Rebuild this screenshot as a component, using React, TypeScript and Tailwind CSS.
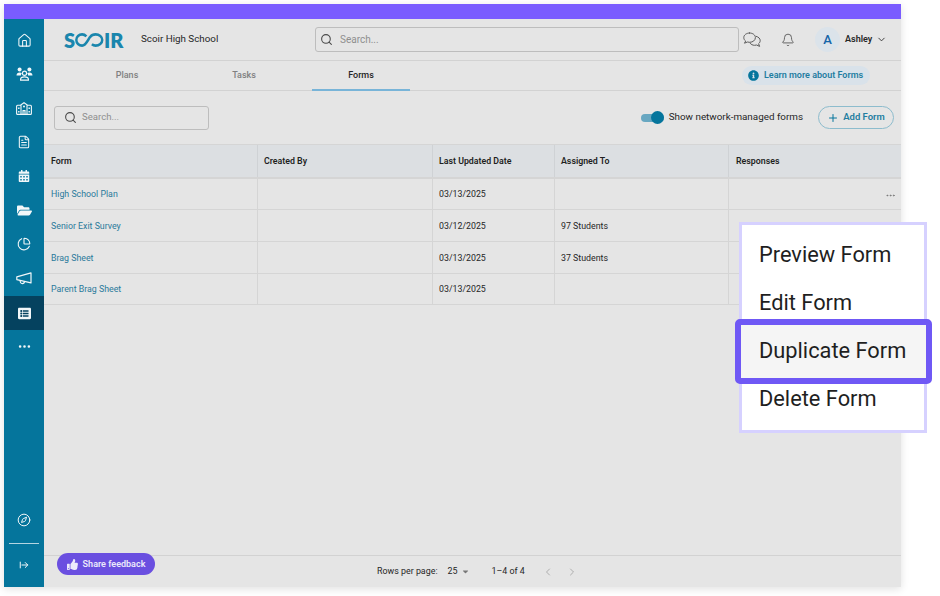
import { Home, FileText, PieChart, MoreHorizontal, Compass, ArrowRightFromLine, Search, Bell, ChevronDown, ChevronLeft, ChevronRight, Plus } from "lucide-react";
import { FaCalendarAlt, FaFolderOpen, FaListAlt, FaInfoCircle, FaThumbsUp, FaCaretDown } from "react-icons/fa";

function PeopleIcon() {
  return (
    <svg width="17" height="14" viewBox="0 0 17 14" fill="currentColor">
      <circle cx="3.6" cy="2.6" r="2" />
      <circle cx="13.4" cy="2.6" r="2" />
      <path d="M0.5 8.6C0.5 6.6 1.8 5.5 3.6 5.5C4.6 5.5 5.3 5.8 5.8 6.3C5.2 7 4.9 7.8 4.9 8.6Z" />
      <path d="M16.5 8.6C16.5 6.6 15.2 5.5 13.4 5.5C12.4 5.5 11.7 5.8 11.2 6.3C11.8 7 12.1 7.8 12.1 8.6Z" />
      <circle cx="8.5" cy="6.2" r="2.1" fill="none" stroke="currentColor" strokeWidth="1.2" />
      <path d="M4.6 13.2V12.2C4.6 10.6 6 9.8 8.5 9.8C11 9.8 12.4 10.6 12.4 12.2V13.2Z" fill="none" stroke="currentColor" strokeWidth="1.2" />
    </svg>
  );
}

function SchoolIcon() {
  return (
    <svg width="16" height="13" viewBox="0 0 16 13" fill="none" stroke="currentColor" strokeWidth="1.1">
      <path d="M5 3.2H1.6C1 3.2 0.6 3.6 0.6 4.2V11.4C0.6 12 1 12.4 1.6 12.4H14.4C15 12.4 15.4 12 15.4 11.4V4.2C15.4 3.6 15 3.2 14.4 3.2H11" />
      <path d="M5 12.4V2.8L8 0.7L11 2.8V12.4" />
      <circle cx="8" cy="4.4" r="1" fill="currentColor" stroke="none" />
      <path d="M7 12.4V8.6H9V12.4" />
      <path d="M2.8 5.6V7M2.8 9V10.4M13.2 5.6V7M13.2 9V10.4" strokeWidth="1.4" />
    </svg>
  );
}

function MegaphoneIcon() {
  return (
    <svg width="16" height="13" viewBox="0 0 16 13" fill="none" stroke="currentColor" strokeWidth="1.2" strokeLinejoin="round">
      <path d="M0.8 4.9L15 0.9V10.9L0.8 7.6Z" />
      <path d="M4.2 8.4C4 10.4 5 11.6 6.4 11.6C7.6 11.6 8.4 10.8 8.5 9.4" />
    </svg>
  );
}

function ChatIcon() {
  return (
    <svg width="18" height="16" viewBox="0 0 18 16" fill="none" stroke="#5a5a5a" strokeWidth="1" strokeLinejoin="round" strokeLinecap="round">
      <path d="M6.6 1C3.3 1 0.8 3 0.8 5.6C0.8 7 1.5 8.2 2.6 9.1L1.5 11.2L4.4 10C5.1 10.2 5.8 10.3 6.6 10.3C9.9 10.3 12.4 8.2 12.4 5.6C12.4 3 9.9 1 6.6 1Z" />
      <path d="M13.4 4.4C15.6 5 17.2 6.6 17.2 8.6C17.2 9.8 16.6 10.9 15.6 11.7L16.6 14.4L13.6 13C12.9 13.2 12.3 13.3 11.6 13.3C9.6 13.3 7.9 12.4 7 11.1" />
    </svg>
  );
}

const navTop = [
  <Home size={15} strokeWidth={1.7} />,
  <PeopleIcon />,
  <SchoolIcon />,
  <FileText size={14} strokeWidth={1.8} />,
  <FaCalendarAlt size={12} />,
  <FaFolderOpen size={15} />,
  <PieChart size={14} strokeWidth={1.9} />,
  <MegaphoneIcon />,
];

const rows = [
  { name: "High School Plan", date: "03/13/2025", to: "", h: "h-[31px]", more: true },
  { name: "Senior Exit Survey", date: "03/12/2025", to: "97 Students", h: "h-[32px]" },
  { name: "Brag Sheet", date: "03/13/2025", to: "37 Students", h: "h-[32px]" },
  { name: "Parent Brag Sheet", date: "03/13/2025", to: "", h: "h-[31px]" },
];

const cols = ["w-[214px]", "w-[175px]", "w-[122px]", "w-[174px]", "flex-1"];
const heads = [
  { label: "Form", cls: "pl-[7px]" },
  { label: "Created By", cls: "pl-[6px]" },
  { label: "Last Updated Date", cls: "pl-[6px]" },
  { label: "Assigned To", cls: "pl-[6px]" },
  { label: "Responses", cls: "pl-[7px]" },
];

function Logo() {
  return (
    <div className="flex w-[61px] items-center text-[20px] font-extrabold leading-none text-[#1a86ad] font-['Lato',sans-serif]">
      <span>S</span>
      <svg width="29" height="14" viewBox="0 0 33 15" fill="none" stroke="#1a86ad" strokeWidth="2.8" preserveAspectRatio="none">
        <path d="M13 3.6C11.6 2.2 10 1.5 8.1 1.5C4.4 1.5 1.5 4.2 1.5 7.5C1.5 10.8 4.4 13.5 8.1 13.5C12.5 13.5 14.5 7.5 17 4.5C18.5 2.6 20.5 1.5 23.5 1.5C27.6 1.5 31 4.2 31 7.5C31 10.8 27.6 13.5 23.5 13.5C21.8 13.5 20.4 13 19.2 12" />
      </svg>
      <span>IR</span>
    </div>
  );
}

export default function App() {
  return (
    <div className="relative h-[596px] w-[940px] overflow-hidden bg-white pl-1 pt-1 font-['Roboto',sans-serif]">
      <div className="flex h-[583px] w-[897px] flex-col bg-[#e5e5e5] shadow-[0_2px_8px_rgba(0,0,0,0.12)]">
        <div className="h-[15px] shrink-0 bg-[#7a5cff]" />
        <div className="flex min-h-0 flex-1">
          <aside className="flex w-[40px] shrink-0 flex-col items-center bg-[#05759c] pb-[2px] pt-[4px] text-[#f2f7f9]">
            {navTop.map((icon, i) => (
              <div key={i} className="flex h-[34px] w-full items-center justify-center">{icon}</div>
            ))}
            <div className="mt-px flex h-[34px] w-full items-center justify-center bg-[#05425f]">
              <FaListAlt size={13} />
            </div>
            <div className="flex h-[33px] w-full items-center justify-center">
              <MoreHorizontal size={15} strokeWidth={2.2} />
            </div>
            <div className="flex-1" />
            <div className="flex h-[28px] w-full items-center justify-center">
              <Compass size={14} strokeWidth={1.7} />
            </div>
            <div className="mt-[9px] h-px w-[30px] bg-[#b5d5e1]" />
            <div className="flex h-[41px] w-full items-center justify-center">
              <ArrowRightFromLine size={10} strokeWidth={2.4} />
            </div>
          </aside>

          <main className="flex min-w-0 flex-1 flex-col">
            <header className="flex h-[42px] shrink-0 items-center border-b border-[#d2d2d2] pl-5">
              <Logo />
              <span className="ml-[16px] w-[77px] whitespace-nowrap text-[9.8px] text-[#262626]">Scoir High School</span>
              <div className="ml-[97px] flex h-[25px] w-[424px] items-center rounded-[3px] border border-[#bdbdbd] px-[4px]">
                <Search size={13} strokeWidth={2} className="text-[#4a4a4a]" />
                <span className="ml-[7px] text-[10px] text-[#8f8f8f]">Search...</span>
              </div>
              <div className="ml-[4px]"><ChatIcon /></div>
              <Bell size={14} strokeWidth={1.5} className="ml-[20px] text-[#555]" />
              <div className="ml-[20px] flex h-[25px] w-[25px] items-center justify-center rounded-full bg-[#dbe3ea] text-[13px] font-medium text-[#1565a8]">A</div>
              <span className="ml-[5px] text-[9px] font-semibold text-[#262626]">Ashley</span>
              <ChevronDown size={11} strokeWidth={2} className="ml-[4px] text-[#333]" />
            </header>

            <nav className="flex h-[30px] shrink-0 items-stretch border-b border-[#d2d2d2] text-[9px] font-medium">
              <div className="flex w-[166px] items-center justify-center text-[#808080]">Plans</div>
              <div className="flex w-[68px] items-center justify-center text-[#808080]">Tasks</div>
              <div className="ml-[34px] -mb-px flex w-[98px] items-center justify-center border-b-2 border-[#78b4d8] pt-px text-[#262626]">Forms</div>
              <div className="flex-1" />
              <div className="mr-[31px] flex h-[19px] w-[128px] items-center self-center rounded-full bg-[#d9e2ea] pl-[6px] text-[9px] font-semibold text-[#1f7da1]">
                <FaInfoCircle size={11} className="mr-[5px] text-[#05759c]" />
                Learn more about Forms
              </div>
            </nav>

            <div className="flex h-[53px] shrink-0 items-center pl-[10px] pr-[7px]">
              <div className="flex h-[24px] w-[155px] items-center rounded-[3px] border border-[#bdbdbd] px-[9px]">
                <Search size={13} strokeWidth={2} className="text-[#4a4a4a]" />
                <span className="ml-[5px] text-[9.6px] text-[#8f8f8f]">Search...</span>
              </div>
              <div className="flex-1" />
              <div className="relative mr-[5px] h-[8px] w-[23px] rounded-full bg-[#68a7c1]">
                <div className="absolute -top-[2.5px] right-0 h-[13px] w-[13px] rounded-full bg-[#05759c]" />
              </div>
              <span className="text-[9.85px] text-[#262626]">Show network-managed forms</span>
              <div className="ml-[15px] flex h-[23px] w-[76px] items-center justify-center rounded-full border border-[#8dbccd] text-[9.5px] font-semibold text-[#1f7da1]">
                <Plus size={12} strokeWidth={2} className="mr-[4px] text-[#05759c]" />
                Add Form
              </div>
            </div>

            <div className="flex h-[35px] shrink-0 border-t border-b-2 border-[#d5d5d5] bg-[#dcdfe2] text-[8.8px] font-semibold text-[#1f1f1f]">
              {heads.map((c, i) => (
                <div key={c.label} className={`flex items-center pt-[2px] ${c.cls} ${cols[i]} ${i < 4 ? "border-r border-[#cfd2d5]" : ""}`}>{c.label}</div>
              ))}
            </div>
            {rows.map((r) => (
              <div key={r.name} className={`flex shrink-0 border-b border-[#d5d5d5] text-[8.8px] text-[#262626] ${r.h}`}>
                <div className={`flex items-center px-[7px] pt-[2px] text-[#2a7a9b] ${cols[0]} border-r border-[#d5d5d5]`}>{r.name}</div>
                <div className={`${cols[1]} border-r border-[#d5d5d5]`} />
                <div className={`flex items-center px-[6px] pt-[2px] ${cols[2]} border-r border-[#d5d5d5]`}>{r.date}</div>
                <div className={`flex items-center px-[6px] pt-[2px] ${cols[3]} border-r border-[#d5d5d5]`}>{r.to}</div>
                <div className="flex flex-1 items-center justify-end pr-[5px] pt-[2px] text-[#777]">
                  {r.more && <MoreHorizontal size={11} strokeWidth={2} />}
                </div>
              </div>
            ))}
            <div className="flex-1" />
            <footer className="relative flex h-[32px] shrink-0 items-center border-t border-[#d2d2d2] text-[8.9px] text-[#262626]">
              <div className="absolute -top-[3px] left-[13px] flex h-[22px] w-[98px] items-center justify-center rounded-full bg-[#6a4fe0] pt-px text-[9px] font-semibold text-[#ece9fb]">
                <FaThumbsUp size={11} className="mr-[5px]" />
                Share feedback
              </div>
              <span className="ml-[333px]">Rows per page:</span>
              <span className="ml-[10px]">25</span>
              <FaCaretDown size={9} className="ml-[3px] text-[#777]" />
              <span className="ml-[22px]">1–4 of 4</span>
              <ChevronLeft size={12} strokeWidth={1.5} className="ml-[17px] text-[#9a9a9a]" />
              <ChevronRight size={12} strokeWidth={1.5} className="ml-[12px] text-[#9a9a9a]" />
            </footer>
          </main>
        </div>
      </div>

      <div className="absolute left-[739px] top-[222px] flex h-[211px] w-[188px] flex-col border-[3px] border-[#d6d1ff] bg-white pl-[17px] pt-[6px] text-[21.8px] leading-[48px] text-[#1f1f1f]">
        <span>Preview Form</span>
        <span>Edit Form</span>
        <span>Duplicate Form</span>
        <span>Delete Form</span>
      </div>
      <div className="absolute left-[735px] top-[319px] flex h-[65px] w-[197px] items-center rounded-[5px] border-[6px] border-[#6f58f5] bg-[#f5f5f5] pl-[18px] text-[21.8px] text-[#1f1f1f]">
        Duplicate Form
      </div>
    </div>
  );
}
